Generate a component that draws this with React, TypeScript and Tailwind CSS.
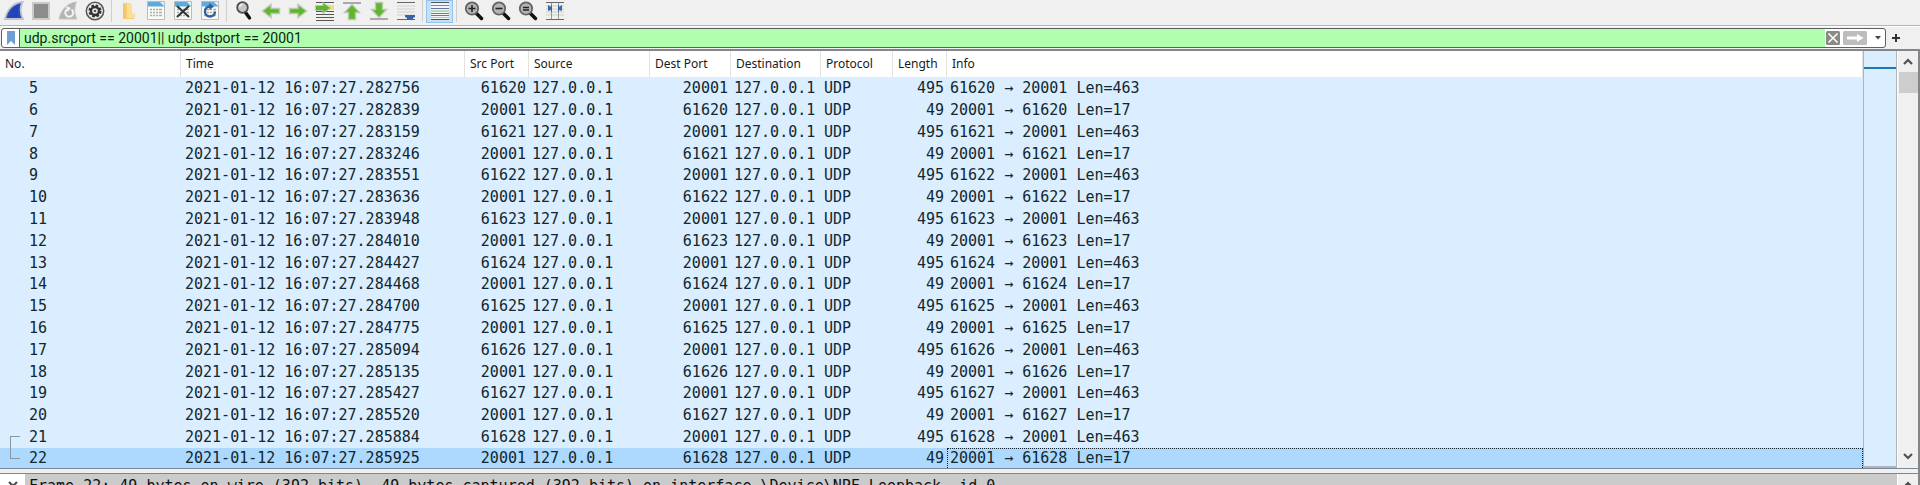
import React from "react";

type Packet = { no: number; time: string; client: number; reply: boolean };

const TIMES = [
  "282756", "282839", "283159", "283246", "283551", "283636", "283948", "284010", "284427",
  "284468", "284700", "284775", "285094", "285135", "285427", "285520", "285884", "285925",
];

const PACKETS: Packet[] = TIMES.map((fraction, i) => ({
  no: i + 5,
  time: `2021-01-12 16:07:27.${fraction}`,
  client: 61620 + Math.floor(i / 2),
  reply: i % 2 === 1,
}));

const Svg = ({ children }: { children: React.ReactNode }) => (
  <svg width="20" height="20" viewBox="0 0 20 20" fill="none" aria-hidden="true">
    {children}
  </svg>
);

const Sheet = ({ children }: { children?: React.ReactNode }) => (
  <Svg>
    <path d="M1.500.500h17v18h-17z" fill="#fbfbf6" stroke="#b9bcb8" />
    <path d="M2 1h13l3 3v1.500H2z" fill="#5fa9dc" />
    <path d="M14 1h4v4z" fill="#e9f2f8" />
    <path d="M4 8.500h2M7 8.500h2M10 8.500h2M13 8.500h3M4 11.500h2M7 11.500h2M10 11.500h2M13 11.500h3M4 14.500h2M7 14.500h2M10 14.500h2M13 14.500h3" stroke="#a9ada9" strokeWidth="1.500" />
    {children}
  </Svg>
);

const Lens = ({ children }: { children: React.ReactNode }) => (
  <Svg>
    <path d="M12 12l5.500 5.500" stroke="#111" strokeWidth="3.500" strokeLinecap="round" />
    <circle cx="8" cy="7.500" r="6.200" fill="#b4b4b4" stroke="#636363" strokeWidth="1.800" />
    {children}
  </Svg>
);

const GREEN = "#5fb52c";
const FRAME = "#b9cbae";

const FinIcon = () => (
  <Svg>
    <path d="M1 18C3 9 9 2 18.500 1c-2.500 5-2.500 12 .500 17z" fill="#2a4fbe" stroke="#c0c3cd" strokeWidth="1.800" />
    <path d="M4 16.500C6 10 10 5 15 3.500c-1.500 5-1 10 .500 13z" fill="#2445b8" />
  </Svg>
);
const StopIcon = () => (
  <Svg>
    <path d="M2 2h16v16H2z" fill="#8c8c8c" stroke="#c9c9c9" strokeWidth="2" />
  </Svg>
);
const RestartIcon = () => (
  <Svg>
    <path d="M1 18C3 9 9 2 18.500 1c-2.500 5-2.500 12 .500 17z" fill="#b4b4b4" stroke="#c4c4c4" />
    <path d="M13.500 8.500a4 4 0 1 1-4.500 0" stroke="#f4f4f4" strokeWidth="2" />
    <path d="M8 5l5 2-3.500 4z" fill="#f4f4f4" />
  </Svg>
);
const GearIcon = () => (
  <Svg>
    <circle cx="10" cy="10" r="8.700" fill="#eee" stroke="#555" strokeWidth="1.500" />
    <circle cx="10" cy="10" r="5.500" stroke="#333" strokeWidth="2.200" strokeDasharray="2.600 1.720" />
    <circle cx="10" cy="10" r="4" stroke="#333" strokeWidth="2.400" />
    <circle cx="10" cy="10" r="1.300" fill="#555" />
  </Svg>
);
const FolderIcon = () => (
  <Svg>
    <path d="M4 2h7v16H4z" fill="#f6d478" />
    <path d="M7 4l2-1v13h6v2H7z" fill="#f3cf72" />
    <path d="M8 3h5v9l3 1v4H8z" fill="#fbdf93" />
    <path d="M4 2l3 3v13l-3-1z" fill="#f0c869" />
  </Svg>
);
const SaveIcon = () => <Sheet />;
const CloseIcon = () => (
  <Sheet>
    <path d="M4.500 5.500l11 10M15.500 5.500l-11 10" stroke="#2e3436" strokeWidth="2" strokeLinecap="round" />
  </Sheet>
);
const ReloadIcon = () => (
  <Sheet>
    <path d="M15 10.500a5 5 0 1 1-5-5" stroke="#2c5f9e" strokeWidth="2.400" />
    <path d="M9 2l5 3.500L9.500 9z" fill="#2c5f9e" />
  </Sheet>
);
const FindIcon = () => (
  <Svg>
    <path d="M11.500 11.500l4 5.500" stroke="#111" strokeWidth="3.400" strokeLinecap="round" />
    <circle cx="8.500" cy="6.500" r="5.300" fill="#c6c6c6" stroke="#4e4e4e" strokeWidth="1.800" />
    <path d="M5.500 6a3.300 3.300 0 0 1 3-2.500" stroke="#f5f5f5" strokeWidth="1.500" />
  </Svg>
);
const ARROW_RIGHT = "M1.500 7.500H10V3.500l8.500 6.500-8.500 6.500v-4H1.500z";
const BackIcon = () => (
  <Svg>
    <path d={ARROW_RIGHT} transform="matrix(-1 0 0 1 20 0)" fill={GREEN} stroke={FRAME} strokeWidth="1.500" />
  </Svg>
);
const ForwardIcon = () => (
  <Svg>
    <path d={ARROW_RIGHT} fill={GREEN} stroke={FRAME} strokeWidth="1.500" />
  </Svg>
);
const GoToIcon = () => (
  <Svg>
    <path d="M1 1.500h18M1 10.500h18M1 13.500h18M1 16.500h18M1 19.500h18" stroke="#555" />
    <path d="M11 4h8v5h-8z" fill="#f6dc6c" />
    <path d="M.500 4.500H8v-3L15.500 7 8 12.500v-3H.500z" fill={GREEN} stroke={FRAME} />
  </Svg>
);
const FirstIcon = () => (
  <Svg>
    <path d="M1 2h18" stroke="#aaa" strokeWidth="2" />
    <path d="M6.500 18.500v-7h-4L10 3.500l7.500 8h-4v7z" fill={GREEN} stroke={FRAME} strokeWidth="1.400" />
  </Svg>
);
const LastIcon = () => (
  <Svg>
    <path d="M1 18h18" stroke="#aaa" strokeWidth="2" />
    <path d="M6.500 1.500v7h-4l7.500 8 7.500-8h-4v-7z" fill={GREEN} stroke={FRAME} strokeWidth="1.400" />
  </Svg>
);
const AutoScrollIcon = () => (
  <Svg>
    <path d="M1 1.500h18M1 18.500h18" stroke="#666" />
    <path d="M1 5h18M1 8h18M1 11h18M1 14h18" stroke="#d0d0cc" />
    <path d="M9 14h10v2l-2 1v2h-6v-2l-2-1z" fill="#3565a8" />
  </Svg>
);
const ColorizeIcon = () => (
  <Svg>
    <path d="M1 1h18v18H1z" fill="#f1f5f5" />
    <path d="M1 1.500h18M1 18.500h18" stroke="#555" />
    <path d="M1 4.500h18" stroke="#d9626c" />
    <path d="M1 7.500h18" stroke="#6470b0" />
    <path d="M1 10h18" stroke="#7cc45c" />
    <path d="M1 12.500h18" stroke="#5b7fae" />
    <path d="M1 14.500h18" stroke="#8c6ca0" />
    <path d="M1 16.500h18" stroke="#d8c860" />
  </Svg>
);
const ZoomInIcon = () => (
  <Lens>
    <path d="M4.500 7.500h7M8 4v7" stroke="#222" strokeWidth="1.600" />
  </Lens>
);
const ZoomOutIcon = () => (
  <Lens>
    <path d="M4.500 7.500h7" stroke="#222" strokeWidth="1.600" />
  </Lens>
);
const ZoomResetIcon = () => (
  <Lens>
    <path d="M5 6.500h6M5 9h6" stroke="#222" strokeWidth="1.500" />
  </Lens>
);
const ResizeIcon = () => (
  <Svg>
    <path d="M1 1.500h18M1 18.500h18" stroke="#666" />
    <path d="M1 5h18M1 8h18M1 11h18M1 14h18" stroke="#cfcfc8" />
    <path d="M6.500 2v16M13.500 2v16" stroke="#999" />
    <path d="M3 4l3 2V4h1v7H6V9l-3 1zM17 4l-3 2V4h-1v7h1V9l3 1z" fill="#3568a8" />
  </Svg>
);

const GROUPS: { label: string; Icon: () => React.JSX.Element; active?: boolean }[][] = [
  [
    { label: "Start capture", Icon: FinIcon },
    { label: "Stop capture", Icon: StopIcon },
    { label: "Restart capture", Icon: RestartIcon },
    { label: "Capture options", Icon: GearIcon },
  ],
  [
    { label: "Open file", Icon: FolderIcon },
    { label: "Save file", Icon: SaveIcon },
    { label: "Close file", Icon: CloseIcon },
    { label: "Reload file", Icon: ReloadIcon },
  ],
  [
    { label: "Find packet", Icon: FindIcon },
    { label: "Previous packet", Icon: BackIcon },
    { label: "Next packet", Icon: ForwardIcon },
    { label: "Go to packet", Icon: GoToIcon },
    { label: "First packet", Icon: FirstIcon },
    { label: "Last packet", Icon: LastIcon },
    { label: "Auto scroll", Icon: AutoScrollIcon },
  ],
  [{ label: "Colorize packets", Icon: ColorizeIcon, active: true }],
  [
    { label: "Zoom in", Icon: ZoomInIcon },
    { label: "Zoom out", Icon: ZoomOutIcon },
    { label: "Normal size", Icon: ZoomResetIcon },
    { label: "Resize columns", Icon: ResizeIcon },
  ],
];

function Toolbar() {
  return (
    <div role="toolbar" className="flex h-[26px] shrink-0 items-start border-b border-[#b4b4b4]">
      {GROUPS.map((group, g) => (
        <React.Fragment key={g}>
          {g > 0 && (
            <div className="flex h-[22px] w-[7px] justify-center">
              <div className="w-px bg-[#cfcfcf]" />
            </div>
          )}
          {group.map(({ label, Icon, active }) => (
            <button
              key={label}
              type="button"
              aria-label={label}
              className={
                active
                  ? "flex h-[23px] w-[27px] items-start border border-[#90c4ee] bg-[#c6e1f6] pl-[3px]"
                  : "flex h-[22px] w-[27px] items-center pl-1"
              }
            >
              <Icon />
            </button>
          ))}
        </React.Fragment>
      ))}
    </div>
  );
}

function FilterBar() {
  return (
    <div className="flex h-[23px] shrink-0 items-center border-t border-white pl-px">
      <div className="flex h-5 min-w-0 flex-1 overflow-hidden rounded-[3px] border border-[#606060] bg-white">
        <button type="button" aria-label="Filter bookmarks" className="flex w-[18px] items-center justify-center border-r border-[#606060]">
          <svg width="8" height="14" viewBox="0 0 8 14" aria-hidden="true">
            <path d="M0 0h8v14l-4-4-4 4z" fill="#6f9fd0" />
          </svg>
        </button>
        <input
          aria-label="Display filter"
          defaultValue="udp.srcport == 20001|| udp.dstport == 20001"
          className="min-w-0 flex-1 bg-[#afffaf] pl-1 font-[Roboto,sans-serif] text-[14px] leading-4 text-[#10240f] outline-none"
        />
        <div className="flex items-center pl-px">
          <button type="button" aria-label="Clear filter">
            <svg width="14" height="14" viewBox="0 0 14 14" fill="none" aria-hidden="true">
              <rect width="14" height="14" rx="1.500" fill="#8a8a86" />
              <path d="M2.500 2.500l9 9M11.500 2.500l-9 9" stroke="#fff" strokeWidth="1.500" />
            </svg>
          </button>
          <button type="button" aria-label="Apply filter" className="ml-[3px]">
            <svg width="24" height="14" viewBox="0 0 24 14" aria-hidden="true">
              <rect width="24" height="14" rx="1.500" fill="#bdbdbd" />
              <path d="M4 5.500h10V3l6.500 4-6.500 4V8.500H4z" fill="#fff" />
            </svg>
          </button>
          <button type="button" aria-label="Filter history" className="flex w-[18px] justify-center pl-1">
            <svg width="6" height="4" viewBox="0 0 6 4" aria-hidden="true">
              <path d="M0 0h6L3 3.500z" fill="#444" />
            </svg>
          </button>
        </div>
      </div>
      <button type="button" aria-label="Add filter button" className="mr-5 ml-[6px]">
        <svg width="8" height="8" viewBox="0 0 8 8" aria-hidden="true">
          <path d="M3 0h2v3h3v2H5v3H3V5H0V3h3z" fill="#333" />
        </svg>
      </button>
    </div>
  );
}

const HEADERS = ["No.", "Time", "Src Port", "Source", "Dest Port", "Destination", "Protocol", "Length", "Info"];

function PacketTable() {
  return (
    <table className="w-full table-fixed border-separate border-spacing-0 bg-[#daeeff]">
      <colgroup>
        <col className="w-[181px]" />
        <col className="w-[284px]" />
        <col className="w-[64px]" />
        <col className="w-[121px]" />
        <col className="w-[81px]" />
        <col className="w-[90px]" />
        <col className="w-[72px]" />
        <col className="w-[54px]" />
        <col />
      </colgroup>
      <thead>
        <tr className="h-[26px] bg-white font-['Noto_Sans',sans-serif] text-xs text-[#1a1a1a]">
          {HEADERS.map((h) => (
            <th key={h} scope="col" className="border-r border-[#e2e2e2] p-0 pl-[5px] text-left font-normal whitespace-nowrap">
              {h}
            </th>
          ))}
        </tr>
      </thead>
      <tbody className="font-['DejaVu_Sans_Mono',monospace] text-[15px] leading-[19px] whitespace-pre text-[#12272e]">
        {PACKETS.map((p) => (
          <tr
            key={p.no}
            className="h-[22px] last:h-[19px] last:bg-[#add9ff] nth-[5n]:h-[21px]"
          >
            <td className="relative p-0 pl-[29px]">
              {p.no === 21 && (
                <span className="absolute top-[10px] left-[10px] h-[23px] w-[10px] border-y border-l border-[#8797a3]" />
              )}
              {p.no}
            </td>
            <td className="p-0 pl-1">{p.time}</td>
            <td className="p-0 pr-[3px] text-right">{p.reply ? 20001 : p.client}</td>
            <td className="p-0 pl-[3px]">127.0.0.1</td>
            <td className="p-0 pr-[3px] text-right">{p.reply ? p.client : 20001}</td>
            <td className="p-0 pl-[3px]">127.0.0.1</td>
            <td className="p-0 pl-[3px]">UDP</td>
            <td className="p-0 pr-[3px] text-right">{p.reply ? 49 : 495}</td>
            <td
              className={
                p.no === 22
                  ? "border-x border-t border-dotted border-[#10202c] p-0 pl-[2px]"
                  : "p-0 pl-[3px]"
              }
            >
              {p.reply ? `20001 → ${p.client} Len=17` : `${p.client} → 20001 Len=463`}
            </td>
          </tr>
        ))}
      </tbody>
    </table>
  );
}

const Chevron = ({ up }: { up?: boolean }) => (
  <svg width="10" height="7" viewBox="0 0 10 7" fill="none" aria-hidden="true">
    <path d={up ? "M1 6l4-4 4 4" : "M1 1l4 4 4-4"} stroke="#505050" strokeWidth="2.200" />
  </svg>
);

export default function App() {
  return (
    <div className="flex h-screen flex-col overflow-hidden bg-[#f0f0f0]">
      <Toolbar />
      <FilterBar />
      <main className="flex min-h-0 flex-1 flex-col border-t-2 border-r-2 border-[#85858c]">
        <section aria-label="Packet list" className="flex shrink-0 border-b border-[#7b8a97]">
          <div className="min-w-0 flex-1">
            <PacketTable />
          </div>
          <div className="w-[34px] border-x border-b-2 border-[#adb5bb] bg-[#daeeff] pt-4">
            <div className="h-[2px] bg-[#1f77b4]" />
          </div>
          <div className="flex w-[21px] flex-col items-center border-l border-white">
            <button type="button" aria-label="Scroll up" className="flex h-[21px] w-full items-center justify-center">
              <Chevron up />
            </button>
            <div className="h-[21px] w-[19px] bg-[#cdcdcd]" />
            <button type="button" aria-label="Scroll down" className="mt-auto flex h-6 w-full items-center justify-center">
              <Chevron />
            </button>
          </div>
        </section>
        <section aria-label="Packet details" className="mt-1 flex min-h-0 flex-1 overflow-hidden border-t border-[#85858c]">
          <button type="button" aria-label="Expand frame" className="flex w-[25px] shrink-0 items-start justify-center bg-white pt-[7px]">
            <Chevron />
          </button>
          <div className="min-w-0 flex-1 bg-[#cbcbcb] pt-[3px] pl-1 font-['DejaVu_Sans_Mono',monospace] text-[15px] leading-[19px] whitespace-pre text-[#111]">
            {"Frame 22: 49 bytes on wire (392 bits), 49 bytes captured (392 bits) on interface \\Device\\NPF_Loopback, id 0"}
          </div>
          <div className="flex w-[21px] shrink-0 items-start justify-center border-l border-white pt-[7px]">
            <Chevron up />
          </div>
        </section>
      </main>
    </div>
  );
}
